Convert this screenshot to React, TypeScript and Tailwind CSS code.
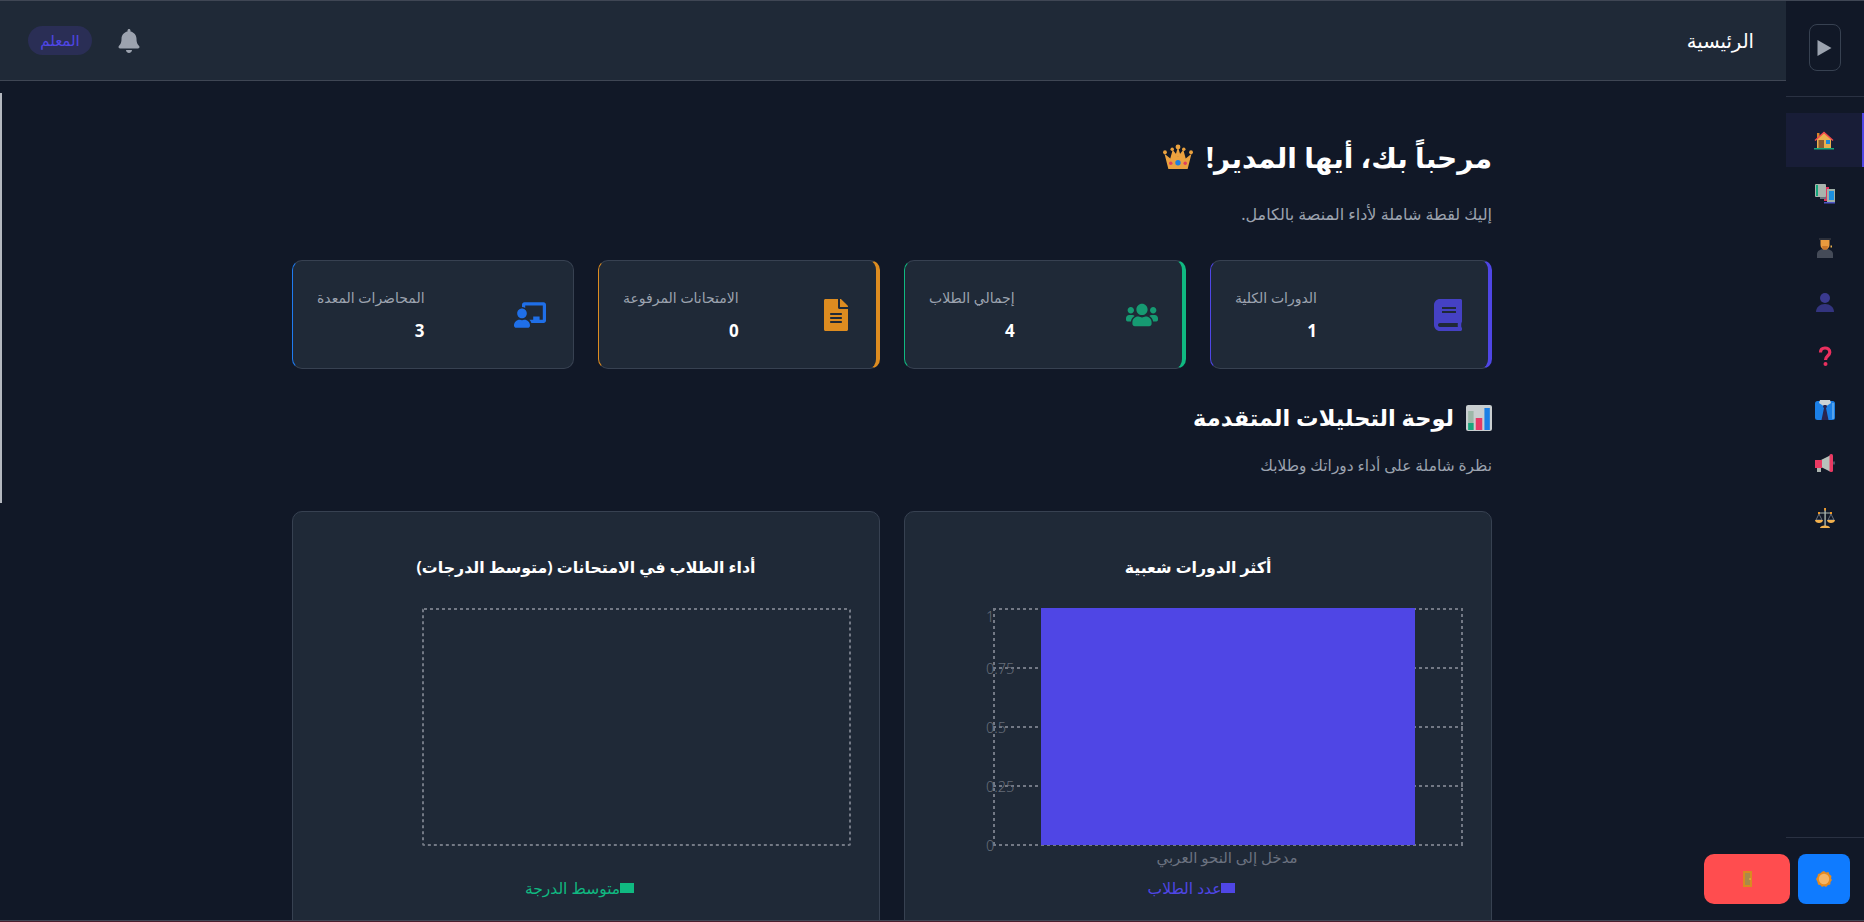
import { FaBell, FaBook, FaChalkboardTeacher, FaFileAlt, FaUsers } from 'react-icons/fa'
import type { ReactNode } from 'react'

const FONT = "font-['Noto_Sans','DejaVu_Sans',sans-serif]"

function House() {
  return (
    <svg viewBox="0 0 20 20" className="h-5 w-5">
      <rect x="3" y="3" width="2.5" height="5" fill="#d9822b" />
      <path d="M3 8.5 10 2l7 6.5V18H3z" fill="#e9b04f" />
      <path d="M0.5 10 10 1.5 19.5 10l-1 1L10 3.5 1.5 11z" fill="#f0484e" />
      <rect x="4.5" y="10" width="5.5" height="8" fill="#8d5a32" />
      <rect x="12" y="10" width="4" height="4" fill="#1e88d8" />
      <rect x="0" y="18" width="20" height="1.5" fill="#17a57c" />
    </svg>
  )
}

function Books() {
  return (
    <svg viewBox="0 0 20 20" className="h-5 w-5">
      <rect x="9" y="3" width="5" height="14" fill="#e0355f" />
      <rect x="0" y="0" width="11" height="13" rx="1" fill="#a9b4ad" />
      <rect x="1" y="1" width="2" height="11" fill="#14a67c" />
      <rect x="5" y="13" width="6" height="2" fill="#6b7280" />
      <rect x="12" y="5" width="8" height="13" fill="#9fb0a8" />
      <rect x="14" y="7" width="5" height="9" fill="#1b8fe0" />
      <rect x="9" y="18" width="11" height="1.5" fill="#4f55c8" />
    </svg>
  )
}

function Graduate() {
  return (
    <svg viewBox="0 0 20 20" className="h-5 w-5">
      <path d="M2 20v-4c0-3 3-5 8-5s8 2 8 5v4z" fill="#454b58" />
      <rect x="4" y="0" width="12" height="2" fill="#2b2f3a" />
      <path d="M5.5 2h9v5c0 2.500-2 4.500-4.500 4.500S5.500 9.500 5.500 7z" fill="#ea9a3e" />
      <path d="M7 8h6l-1 3.500H8z" fill="#c9752a" />
      <rect x="15.500" y="7.500" width="1.500" height="2" fill="#e9b04f" />
    </svg>
  )
}

function Bust() {
  return (
    <svg viewBox="0 0 20 20" className="h-5 w-5">
      <circle cx="10" cy="6" r="5" fill="#3a3a8f" />
      <path d="M1 20c0-5 4-8 9-8s9 3 9 8z" fill="#33347f" />
    </svg>
  )
}

function Question() {
  return (
    <svg viewBox="0 0 20 20" className="h-5 w-5">
      <path d="M5.500 6.500C5.500 3.500 7.500 2 10 2s4.800 1.500 4.800 4.300c0 3.400-4.300 3.500-4.300 7.700" fill="none" stroke="#ea2f5e" strokeWidth="3.200" />
      <circle cx="10.500" cy="18" r="2" fill="#ea2f5e" />
    </svg>
  )
}

function Suit() {
  return (
    <svg viewBox="0 0 20 20" className="h-5 w-5">
      <rect x="0" y="1" width="20" height="19" rx="2.500" fill="#1b7fe6" />
      <rect x="17.500" y="3" width="1" height="16" fill="#8fc5ee" />
      <path d="M5 0h10l1 3-6 4-6-4z" fill="#cdd3d6" />
      <path d="M8.500 5h3l.5 2-1 1 2.500 12h-7L9 8 8 7z" fill="#2a2550" />
    </svg>
  )
}

function Megaphone() {
  return (
    <svg viewBox="0 0 20 20" className="h-5 w-5">
      <rect x="2" y="13" width="4" height="5" fill="#aab2ad" />
      <path d="M6 6 15 1.500v16L6 13z" fill="#b8c2bc" />
      <rect x="0" y="6" width="7" height="8" fill="#ea3a63" />
      <rect x="14.500" y="0" width="3.500" height="18" rx="1.500" fill="#ea3a63" />
      <rect x="18" y="7.500" width="2" height="3" fill="#4b5563" />
    </svg>
  )
}

function Scales() {
  return (
    <svg viewBox="0 0 20 20" className="h-5 w-5">
      <rect x="9.400" y="0" width="1.400" height="18" fill="#a8b3ad" />
      <rect x="9.200" y="0" width="1.800" height="2.500" fill="#f09a2b" />
      <rect x="3.500" y="4.500" width="13" height="1" fill="#a8b3ad" />
      <rect x="3" y="4" width="2" height="2" fill="#f09a2b" />
      <rect x="15" y="4" width="2" height="2" fill="#f09a2b" />
      <path d="M4 6 1 12h6zM16 6l-3 6h6z" fill="none" stroke="#8b949e" strokeWidth=".7" />
      <path d="M0 12h8c0 2-2 3-4 3s-4-1-4-3zM12 12h8c0 2-2 3-4 3s-4-1-4-3z" fill="#f3b14e" />
      <path d="M5 20c0-1.500 2-2.500 5-2.500s5 1 5 2.500z" fill="#f3b14e" />
    </svg>
  )
}

function Crown() {
  return (
    <svg viewBox="0 0 32 28" className="h-[27px] w-[32px]">
      <path d="M6 26 2 10l6 5 2.500-9L16 13l5.500-7 2.500 9 6-5-4 16z" fill="#eba23f" />
      <circle cx="16" cy="3" r="2.500" fill="#eba23f" />
      <path d="M16 3 13 13h6z" fill="#eba23f" />
      <circle cx="2.500" cy="8.500" r="2" fill="#eba23f" />
      <circle cx="29.500" cy="8.500" r="2" fill="#eba23f" />
      <circle cx="10" cy="5.500" r="1.800" fill="#eba23f" />
      <circle cx="22" cy="5.500" r="1.800" fill="#eba23f" />
      <circle cx="16" cy="19.500" r="2.800" fill="#1e7fe0" />
      <circle cx="8.500" cy="20" r="1.800" fill="#e0405f" />
      <circle cx="23.500" cy="20" r="1.800" fill="#e0405f" />
    </svg>
  )
}

function ChartEmoji() {
  return (
    <svg viewBox="0 0 24 26" preserveAspectRatio="none" className="h-[26px] w-[26px]">
      <rect x="0" y="0" width="24" height="26" rx="2" fill="#c9ced0" />
      <rect x="2" y="6" width="5" height="19" fill="#9db8a8" />
      <rect x="2" y="18" width="5" height="7" fill="#18a67e" />
      <rect x="9" y="13" width="6" height="12" fill="#e63a66" />
      <rect x="17" y="3" width="5" height="22" fill="#1b7fe6" />
    </svg>
  )
}

function Sun() {
  return (
    <svg viewBox="0 0 16 16" className="h-4 w-4">
      <path d="M8 0l2 1.500 2.500-.5.800 2.200L15.500 5 15 7.500 16 9l-1.500 2-.2 2.500-2.300.5L10 16l-2-1-2 1-1.500-1.800-2.500-.7L1.500 11 0 8l1.500-2.500L2 3l2.500-.8L6 .8z" fill="#e58a1f" />
      <circle cx="8" cy="8" r="5.200" fill="#f5b565" />
    </svg>
  )
}

function Door() {
  return (
    <svg viewBox="0 0 9 16" className="h-4 w-[9px]">
      <rect width="9" height="16" fill="#d98a22" />
      <rect x="2" y="2" width="5" height="12" fill="#a98a4a" />
      <circle cx="7" cy="8" r="0.800" fill="#f5c542" />
    </svg>
  )
}

const NAV: ReactNode[] = [<House />, <Books />, <Graduate />, <Bust />, <Question />, <Suit />, <Megaphone />, <Scales />]

function Sidebar() {
  return (
    <aside className="relative flex w-[78px] shrink-0 flex-col bg-[#111827]">
      <div className="flex h-[96px] items-center justify-center border-b border-[#2a3142] pb-[2px]">
        <button className="flex h-[47px] w-8 items-center justify-center rounded-lg border border-[#374151] text-[#9ca3af]">
          <svg viewBox="0 0 14 16" className="h-[16px] w-[15px] translate-x-[-1px]">
            <path d="M0 0 14 8 0 16z" fill="#9ca3af" />
          </svg>
        </button>
      </div>
      <nav className="mt-4 flex flex-col">
        {NAV.map((icon, i) => (
          <a
            key={i}
            className={
              i === 0
                ? 'flex h-[54px] items-center justify-center border-r-2 border-[#4f46e5] bg-[#181d37]'
                : 'flex h-[54px] items-center justify-center'
            }
          >
            {icon}
          </a>
        ))}
      </nav>
      <div className="absolute bottom-[84px] left-0 right-0 border-t border-[#2a3142]" />
    </aside>
  )
}

function Header() {
  return (
    <header className="flex h-[80px] shrink-0 items-center justify-between border-b border-[#3f4654] bg-[#1f2937] pl-7 pr-8">
      <div className="flex items-center gap-[25px]">
        <span className="flex h-[29px] w-[64px] items-center justify-center rounded-full bg-[#2a2e55] text-[15px] text-[#4f46e5]">
          المعلم
        </span>
        <FaBell className="h-6 w-6 text-[#9ca3af]" />
      </div>
      <h1 className="text-[19.500px] font-medium text-white">الرئيسية</h1>
    </header>
  )
}

type Stat = { label: string; value: string; icon: ReactNode; edge: string }

const STATS: Stat[] = [
  { label: 'الدورات الكلية', value: '1', icon: <FaBook className="h-8 w-7 text-[#4541c4]" />, edge: 'border-r-4 pr-5 border-r-[#4f46e5] border-l-[#4f46e5]' },
  { label: 'إجمالي الطلاب', value: '4', icon: <FaUsers className="h-8 w-8 text-[#169a72]" />, edge: 'border-r-4 pr-5 border-r-[#10b981] border-l-[#10b981]' },
  { label: 'الامتحانات المرفوعة', value: '0', icon: <FaFileAlt className="h-8 w-6 text-[#dd8c20]" />, edge: 'border-r-4 pr-5 border-r-[#dd8c20] border-l-[#dd8c20]' },
  { label: 'المحاضرات المعدة', value: '3', icon: <FaChalkboardTeacher className="h-8 w-8 text-[#1f6fe8]" />, edge: 'pr-[23px] border-l-[#1f7bf0]' },
]

function StatCard({ stat }: { stat: Stat }) {
  return (
    <div className={`flex h-[109px] items-center justify-between rounded-[10px] border border-[#374151] bg-[#1f2937] pl-6 ${stat.edge}`}>
      <div className="flex flex-col items-start" dir="rtl">
        <span className="text-[14px] leading-5 text-[#9ca3af]">{stat.label}</span>
        <span className="mt-[13px] text-[17px] font-bold leading-5 text-white">{stat.value}</span>
      </div>
      <div className="flex w-10 items-center justify-center">{stat.icon}</div>
    </div>
  )
}

const GRID_Y = [1, 60, 119, 178, 237]
const TICKS = ['1', '0.75', '0.5', '0.25', '0']

function ChartCard({ title, children, legend, swatch }: { title: string; children: ReactNode; legend: string; swatch: 'indigo' | 'emerald' }) {
  return (
    <div className="flex h-[410px] flex-col rounded-t-[10px] border border-[#374151] bg-[#1f2937]">
      <h3 className="mt-[41px] text-center text-[15.800px] font-bold leading-7 text-white">{title}</h3>
      {children}
      <div dir="rtl" className={`mt-[6px] flex items-center justify-center pr-[13px] text-[15.500px] leading-5 ${swatch === 'indigo' ? 'text-[#4f46e5]' : 'text-[#10b981]'}`}>
        <span className={`h-[10px] w-[14px] ${swatch === 'indigo' ? 'bg-[#4f46e5]' : 'bg-[#10b981]'}`} />
        <span>{legend}</span>
      </div>
    </div>
  )
}

function BarChart() {
  return (
    <svg viewBox="0 0 586 264" className="mt-[27px] h-[264px] w-[586px]" fill="none">
      {GRID_Y.map((y) => (
        <line key={y} x1="88" x2="558" y1={y} y2={y} stroke="#737985" strokeWidth="2" strokeDasharray="3 3" />
      ))}
      <line x1="89" x2="89" y1="0" y2="238" stroke="#737985" strokeWidth="2" strokeDasharray="3 3" />
      <line x1="557" x2="557" y1="0" y2="238" stroke="#737985" strokeWidth="2" strokeDasharray="3 3" />
      <rect x="136" y="0" width="374" height="237" fill="#4f46e5" />
      {TICKS.map((t, i) => (
        <text key={t} x={81} y={t === '1' ? 14 : GRID_Y[i] + 6} fill="#666d79" fontSize="14.500" fontFamily="'Noto Sans', sans-serif" fontWeight="300">
          {t}
        </text>
      ))}
      <text x="322" y="255" textAnchor="middle" fill="#6b7280" fontSize="15">
        مدخل إلى النحو العربي
      </text>
    </svg>
  )
}

function EmptyChart() {
  return (
    <svg viewBox="0 0 586 264" className="mt-[27px] h-[264px] w-[586px]" fill="none">
      <rect x="130" y="1" width="427" height="236" rx="1" stroke="#737985" strokeWidth="2" strokeDasharray="3 3" />
    </svg>
  )
}

export default function App() {
  return (
    <div className={`relative flex h-[922px] w-full overflow-hidden border-t border-[#3f4654] bg-[#111827] ${FONT}`}>
      <div className="relative flex min-w-0 flex-1 flex-col">
        <Header />
        <div className="absolute left-0 top-[92px] h-[410px] w-[2px] bg-[#b4b8bf]" />
        <main className="flex justify-center overflow-hidden pr-[2px] pt-[54px]">
          <div className="w-[1200px]" dir="rtl">
            <h2 className="flex items-center gap-3 text-[28px] font-bold leading-[44px] text-white">
              مرحباً بك، أيها المدير!
              <Crown />
            </h2>
            <p className="mt-[23px] text-[16px] leading-6 text-[#9ca3af]">إليك لقطة شاملة لأداء المنصة بالكامل.</p>
            <div className="mt-[34px] grid grid-cols-4 gap-6" dir="ltr">
              {[...STATS].reverse().map((s) => (
                <StatCard key={s.label} stat={s} />
              ))}
            </div>
            <h2 className="mt-[31px] flex items-center gap-3 text-[22.500px] font-bold leading-9 text-white">
              <ChartEmoji />
              لوحة التحليلات المتقدمة
            </h2>
            <p className="mt-[18px] text-[15.400px] leading-6 text-[#9ca3af]">نظرة شاملة على أداء دوراتك وطلابك</p>
            <div className="mt-[33px] grid grid-cols-2 gap-6" dir="ltr">
              <ChartCard title="أداء الطلاب في الامتحانات (متوسط الدرجات)" legend="متوسط الدرجة" swatch="emerald">
                <EmptyChart />
              </ChartCard>
              <ChartCard title="أكثر الدورات شعبية" legend="عدد الطلاب" swatch="indigo">
                <BarChart />
              </ChartCard>
            </div>
          </div>
        </main>
      </div>
      <Sidebar />
      <div className="absolute bottom-[18px] right-[14px] flex items-center gap-2">
        <button className="flex h-[50px] w-[86px] items-center justify-center rounded-[10px] bg-[#ff4d4f]">
          <Door />
        </button>
        <button className="flex h-[50px] w-[52px] items-center justify-center rounded-lg bg-[#0f7bff]">
          <Sun />
        </button>
      </div>
      <div className="absolute bottom-0 left-0 right-0 h-[2px] border-t border-[#3f4654] bg-[#4a1f2e]" />
    </div>
  )
}
